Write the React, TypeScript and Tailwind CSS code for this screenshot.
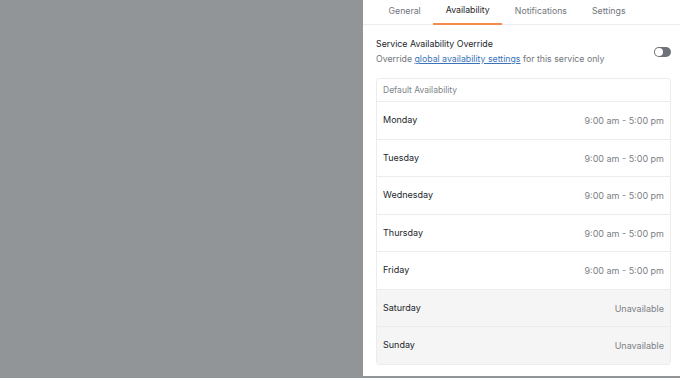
import React from "react";

const tabs = ["General", "Availability", "Notifications", "Settings"];

const days = [
  { name: "Monday", hours: "9:00 am - 5:00 pm", off: false },
  { name: "Tuesday", hours: "9:00 am - 5:00 pm", off: false },
  { name: "Wednesday", hours: "9:00 am - 5:00 pm", off: false },
  { name: "Thursday", hours: "9:00 am - 5:00 pm", off: false },
  { name: "Friday", hours: "9:00 am - 5:00 pm", off: false },
  { name: "Saturday", hours: "Unavailable", off: true },
  { name: "Sunday", hours: "Unavailable", off: true },
];

function Tabs() {
  return (
    <div className="flex h-[25px] border-b border-[#ececec] pl-[13px]">
      {tabs.map((tab) => {
        const active = tab === "Availability";
        return (
          <div
            key={tab}
            className={
              active
                ? "flex items-center px-[12.5px] h-[25px] border-b-2 border-[#f58b4c] text-[#1f2328] text-[8.75px]"
                : "flex items-center px-[12.5px] h-[25px] text-[#70757a] text-[8.75px]"
            }
          >
            <span className="-mt-[2px]">{tab}</span>
          </div>
        );
      })}
    </div>
  );
}

function Toggle() {
  return (
    <div className="w-[17px] h-[10px] rounded-full bg-[#6f7378] flex items-center px-[1px]">
      <div className="w-[8px] h-[8px] rounded-full bg-white" />
    </div>
  );
}

function AvailabilityCard() {
  return (
    <div className="mt-[12px] border border-[#ececec] rounded-[3px] overflow-hidden">
      <div className="h-[22px] flex items-center px-[6px] text-[8.5px] text-[#80858a]">
        Default Availability
      </div>
      {days.map((day) => (
        <div
          key={day.name}
          className={
            day.off
              ? "h-[37.5px] flex items-center justify-between px-[6px] border-t border-[#ececec] bg-[#f5f5f5]"
              : "h-[37.5px] flex items-center justify-between px-[6px] border-t border-[#ececec] bg-white"
          }
        >
          <span className="text-[9px] text-[#23272b] -mt-[1px]">{day.name}</span>
          <span className="text-[9px] text-[#7c8186] mt-[1px]">{day.hours}</span>
        </div>
      ))}
    </div>
  );
}

export default function App() {
  return (
    <div
      className="flex w-[680px] h-[378px] overflow-hidden bg-[#929598]"
      style={{ fontFamily: "Inter, 'Noto Sans', sans-serif" }}
    >
      <div className="w-[363px] shrink-0" />
      <div className="flex-1 bg-white h-[376px] flex flex-col">
        <Tabs />
        <div className="pl-[13px] pr-[9px]">
          <div className="flex items-center justify-between mt-[12px]">
            <div>
              <div className="text-[8.8px] text-[#23272b] leading-[13px]">
                Service Availability Override
              </div>
              <div className="text-[8.75px] text-[#70757a] leading-[13px] mt-[3px]">
                Override{" "}
                <span className="text-[#3b73b9] underline">global availability settings</span>{" "}
                for this service only
              </div>
            </div>
            <Toggle />
          </div>
          <AvailabilityCard />
        </div>
      </div>
    </div>
  );
}
